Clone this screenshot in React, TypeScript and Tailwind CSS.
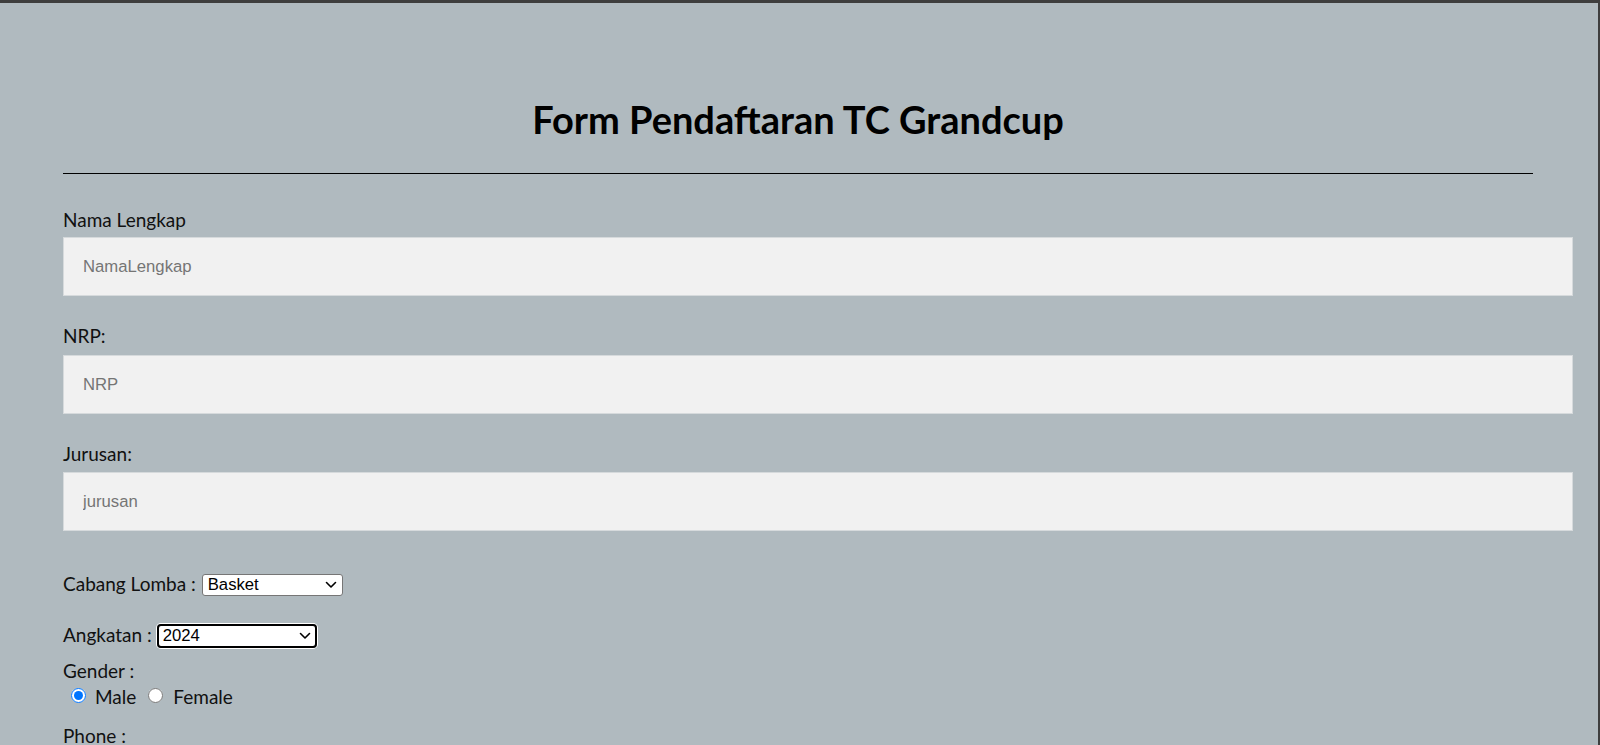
import { useState } from "react";

const labelFont = { fontFamily: "Lato, 'Open Sans', sans-serif" };

function Chevron() {
  return (
    <svg width="12" height="8" viewBox="0 0 12 8" className="pointer-events-none absolute right-[6px] top-1/2 -translate-y-1/2">
      <path d="M1.5 1.5 L6 6 L10.5 1.5" fill="none" stroke="#000" strokeWidth="1.6" strokeLinecap="round" strokeLinejoin="round" />
    </svg>
  );
}

export default function App() {
  const [gender, setGender] = useState("male");

  return (
    <div className="min-h-screen border-t-[3px] border-r-2 border-[#3e3e3e] bg-[#b0babf] text-black" style={labelFont}>
      <div className="ml-[63px] mr-[65px] pt-[96px] pb-16">
        <h1 className="text-center text-[38px] font-bold leading-[41px]">Form Pendaftaran TC Grandcup</h1>
        <div className="mt-[33px] h-px bg-black" />

        {/* Data diri */}
        <label className="mt-[34px] block text-[19px] leading-[23px] text-[#111]">Nama Lengkap</label>
        <input
          placeholder="NamaLengkap"
          className="mt-[6px] box-content block h-[57px] w-full border border-[#d6dadc] bg-[#f1f1f1] px-[19px] py-0 font-['Liberation_Sans',Arial,sans-serif] text-[16.7px] placeholder:text-[#757575]"
        />

        <label className="mt-[28px] block text-[19px] leading-[23px] text-[#111]">NRP:</label>
        <input
          placeholder="NRP"
          className="mt-[8px] box-content block h-[57px] w-full border border-[#d6dadc] bg-[#f1f1f1] px-[19px] py-0 font-['Liberation_Sans',Arial,sans-serif] text-[16.7px] placeholder:text-[#757575]"
        />

        <label className="mt-[28px] block text-[19px] leading-[23px] text-[#111]">Jurusan:</label>
        <input
          placeholder="jurusan"
          className="mt-[7px] box-content block h-[57px] w-full border border-[#d6dadc] bg-[#f1f1f1] px-[19px] py-0 font-['Liberation_Sans',Arial,sans-serif] text-[16.7px] placeholder:text-[#757575]"
        />

        {/* Pilihan */}
        <div className="mt-[42px] flex h-[23px] items-center gap-[6px] text-[19px] text-[#111]">
          <span>Cabang Lomba :</span>
          <div className="relative">
            <select className="block h-[22px] w-[141px] appearance-none rounded-[3px] border border-[#767676] bg-white pl-[5px] font-['Liberation_Sans',Arial,sans-serif] text-[16.7px] leading-[20px] text-black">
              <option>Basket</option>
              <option>Futsal</option>
              <option>Voli</option>
              <option>Badminton</option>
            </select>
            <Chevron />
          </div>
        </div>

        <div className="mt-[28px] flex h-[23px] items-center gap-[5px] text-[19px] text-[#111]">
          <span>Angkatan :</span>
          <div className="relative rounded-[4px] ring-1 ring-white">
            <select className="block h-[24px] w-[160px] appearance-none rounded-[4px] border-2 border-black bg-white pl-[4px] font-['Liberation_Sans',Arial,sans-serif] text-[16.7px] leading-[20px] text-black">
              <option>2024</option>
              <option>2023</option>
              <option>2022</option>
              <option>2021</option>
            </select>
            <Chevron />
          </div>
        </div>

        <div className="mt-[12px] text-[19px] leading-[23px] text-[#111]">Gender :</div>
        <div className="mt-[4px] flex h-[23px] items-center text-[19px] text-[#111]">
          <input
            type="radio"
            name="gender"
            checked={gender === "male"}
            onChange={() => setGender("male")}
            className="mb-[4px] ml-[8px] mr-[9px] h-[15px] w-[15px] accent-[#0075ff]"
          />
          <span>Male</span>
          <input
            type="radio"
            name="gender"
            checked={gender === "female"}
            onChange={() => setGender("female")}
            className="mb-[4px] ml-[12px] mr-[10px] h-[15px] w-[15px] accent-[#0075ff]"
          />
          <span>Female</span>
        </div>

        <label className="mt-[15px] block text-[19px] leading-[23px] text-[#111]">Phone :</label>
        <input
          placeholder="Phone"
          className="mt-[8px] box-content block h-[57px] w-full border border-[#d6dadc] bg-[#f1f1f1] px-[19px] py-0 font-['Liberation_Sans',Arial,sans-serif] text-[16.7px] placeholder:text-[#757575]"
        />

        <button className="mt-[28px] bg-[#4caf50] px-5 py-3 text-[19px] text-white">Submit</button>
      </div>
    </div>
  );
}
